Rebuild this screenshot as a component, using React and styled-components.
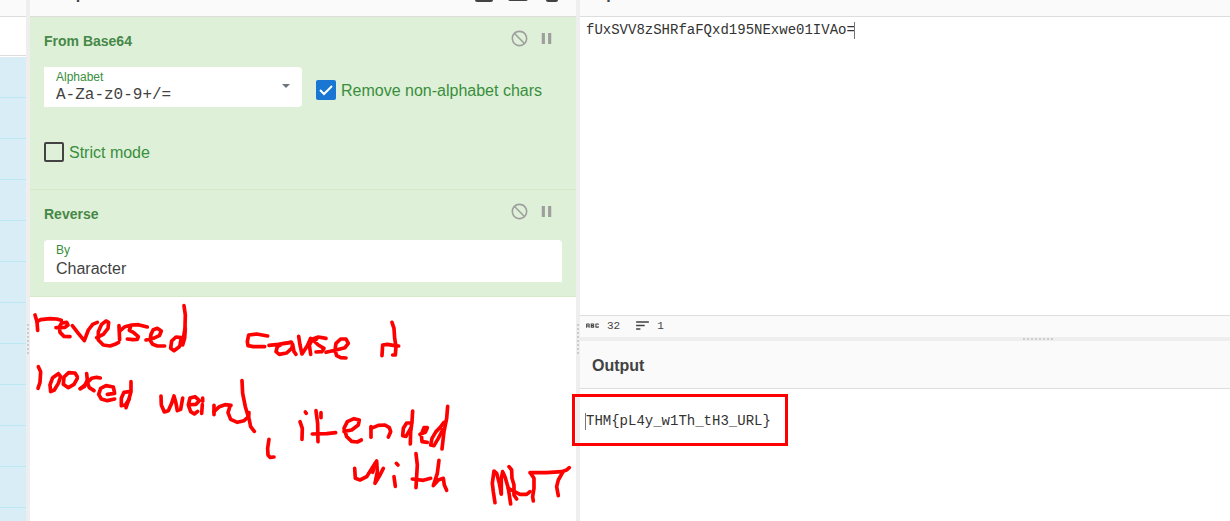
import React from "react";
import styled, { createGlobalStyle } from "styled-components";
import { MdNotInterested, MdPause, MdSave, MdFolder, MdDelete, MdAbc, MdSort } from "react-icons/md";

const GlobalStyle = createGlobalStyle`
  *, *::before, *::after { box-sizing: border-box; }
  body {
    margin: 0;
    background: #fff;
    color: #424242;
    font-family: "Liberation Sans", Arial, sans-serif;
    font-size: 16px;
  }
`;

const Workspace = styled.div`
  display: grid;
  grid-template-columns: 26px 4px 546fr 4px 650fr;
  height: 100vh;
  overflow: hidden;
`;

const Column = styled.section`
  display: flex;
  flex-direction: column;
  min-width: 0;
  min-height: 0;
  overflow: ${(p) => (p.$clip ? "hidden" : "visible")};
`;

const TitleBar = styled.header`
  flex: none;
  display: flex;
  align-items: flex-end;
  height: ${(p) => (p.$scrolled ? "17px" : "48px")};
  overflow: hidden;
  background: #fafafa;
  border-bottom: 1px solid #ddd;
`;

const TitleContent = styled.div`
  flex: 1;
  display: flex;
  align-items: center;
  justify-content: space-between;
  height: 48px;
  padding: 2px 12px 0;
`;

const Title = styled.h2`
  margin: 0;
  padding-top: 2px;
  font-size: 16px;
  line-height: 20px;
`;

const IconRow = styled.div`
  display: flex;
  gap: ${(p) => p.$gap}px;
`;

const IconButton = styled.button`
  display: flex;
  padding: 0;
  border: 0;
  background: none;
  color: ${(p) => (p.$muted ? "#9e9e9e" : "#424242")};
  cursor: pointer;
`;

const Gutter = styled.div`
  display: flex;
  flex-direction: ${(p) => (p.$horizontal ? "row" : "column")};
  align-items: center;
  gap: 2px;
  padding: ${(p) => (p.$horizontal ? "0 0 0 443px" : "324px 0 0")};
  background: #eee;
`;

const Dot = styled.i`
  width: 2px;
  height: 2px;
  background: #ccc;
`;

const Search = styled.input`
  flex: none;
  width: 100%;
  height: 39px;
  margin-bottom: 1px;
  border: 0;
  border-bottom: 1px solid #ddd;
  background: #fff;
`;

const OperationList = styled.ul`
  margin: 0;
  padding: 0;
  list-style: none;
`;

const OperationItem = styled.li`
  height: 41px;
  background: #d9edf7;
  border-bottom: 1px solid #bce8f1;
`;

const Operation = styled.article`
  flex: none;
  padding: 12px 14px ${(p) => p.$bottom}px;
  background: #dff0d8;
  border-bottom: 1px solid #d6e9c6;
`;

const OperationHead = styled.div`
  display: flex;
  align-items: flex-start;
  justify-content: space-between;
  height: 38px;
  padding-right: 6px;
`;

const OperationName = styled.h3`
  margin: 0;
  padding-top: 4px;
  color: #468847;
  font-size: 14px;
  line-height: 16px;
`;

const Arguments = styled.div`
  display: flex;
  flex-wrap: wrap;
  align-items: center;
  gap: 35px 14px;
`;

const Field = styled.label`
  display: flex;
  flex-direction: column;
  width: ${(p) => (p.$wide ? "100%" : "258px")};
  height: ${(p) => (p.$wide ? "42px" : "40px")};
  padding: 4px 12px 0;
  background: #fff;
  border-radius: ${(p) => (p.$wide ? "4px 4px 0 0" : "0 4px 4px 0")};
`;

const FieldName = styled.span`
  color: #388e3c;
  font-size: 12px;
  line-height: 12px;
`;

const FieldRow = styled.span`
  display: flex;
  align-items: center;
`;

const TextInput = styled.input`
  flex: 1;
  min-width: 0;
  height: 24px;
  padding: 0;
  border: 0;
  background: none;
  color: #424242;
  font: 16px "Liberation Mono", monospace;
`;

const MenuButton = styled.button`
  display: flex;
  align-items: flex-start;
  height: 22px;
  padding: 0;
  border: 0;
  background: none;
`;

const Select = styled.select`
  appearance: none;
  height: 24px;
  padding: 0;
  border: 0;
  background: none;
  color: #424242;
  font: 16px "Liberation Sans", Arial, sans-serif;
`;

const CheckLabel = styled.label`
  display: flex;
  align-items: flex-start;
  gap: 5px;
  margin-top: ${(p) => (p.$raised ? "8px" : "0")};
  color: #388e3c;
  line-height: 22px;
`;

const BoxStack = styled.span`
  display: grid;
  > * { grid-area: 1 / 1; }
  > svg { pointer-events: none; }
`;

const Checkbox = styled.input`
  appearance: none;
  width: 20px;
  height: 20px;
  margin: 0;
  border: 2px solid #424242;
  border-radius: 2px;
  &:checked {
    border-color: #1976d2;
    background: #1976d2;
  }
`;

const Ink = styled.svg`
  flex: none;
  display: block;
  width: 546px;
  height: 224px;
  fill: none;
  stroke: #f00;
  stroke-linecap: round;
  stroke-linejoin: round;
`;

const IoColumn = styled.section`
  display: grid;
  grid-template-rows: 337fr 4px 180fr;
  min-width: 0;
`;

const Editor = styled.div`
  position: relative;
  flex: 1;
  display: flex;
  min-height: 0;
`;

const TextArea = styled.textarea`
  flex: 1;
  min-width: 0;
  padding: ${(p) => p.$top}px 6px 0;
  border: 0;
  outline: 0;
  resize: none;
  background: none;
  color: #333;
  font: 14px/16px "Liberation Mono", monospace;
`;

const Caret = styled.span`
  position: absolute;
  top: ${(p) => p.$top}px;
  left: ${(p) => p.$left}px;
  width: 1px;
  height: 17px;
  background: #777;
`;

const Highlight = styled.div`
  position: absolute;
  top: 5px;
  left: -8px;
  width: 216px;
  height: 52px;
  border: 3px solid #f00;
  pointer-events: none;
`;

const StatusBar = styled.footer`
  flex: none;
  display: flex;
  align-items: center;
  gap: 14px;
  height: 22px;
  padding: 0 4px 2px;
  background: #fafafa;
  border-top: 1px solid #ddd;
  font: 11px "Liberation Mono", monospace;
`;

const Status = styled.span`
  display: flex;
  align-items: center;
  gap: 6px;
`;

// Freehand strokes, grouped by the origin of each part of the note.
const notes = [
  { x: 20, y: 295, strokes: [
    "45,60 51,80 53,106", "51,80 62,74 90,71 110,72 124,76",
    "108,98 135,97 144,90 140,82 125,84 118,96 120,112 132,124 150,125",
    "157,92 175,115 193,137 205,105 218,88 232,82",
    "230,128 250,118 264,100 266,82 258,78 245,88 235,110 235,135 250,150 270,153 285,148 296,142",
    "297,92 299,134", "299,108 315,95 335,90 355,89 370,93 382,96",
    "332,94 328,106 340,112 355,125 352,133 338,134 322,132",
    "378,135 400,130 418,122 424,108 412,100 400,104 393,118 390,135 398,148 412,153 434,153",
    "492,32 496,60 495,100 490,130 478,155 462,167 452,160 455,138 468,126 484,128 480,150", "496,100 494,130 488,150",
    "55,215 62,230 60,262 54,280",
    "115,236 98,248 90,270 92,290 103,285 115,265 122,245 115,236",
    "172,245 165,234 146,233 132,246 130,268 145,278 162,268 172,250",
    "200,236 202,255 193,275 180,281", "182,281 200,265 215,250 230,247 241,249", "202,262 208,278 222,287",
    "262,298 284,295 280,276 258,272 242,280 236,298 244,312 262,317 284,312",
    "333,260 333,290 326,315 318,338", "328,290 312,292 304,310 304,332 316,330 328,312",
  ] },
  { x: 220, y: 295, strokes: [
    "143,123 110,117 86,120 82,140 84,152 100,155 134,155",
    "147,151 175,148 215,142 190,145 172,155 168,170 178,178 200,174 215,160 218,148 222,170 228,178",
    "236,124 240,150 246,177 262,152 272,130",
    "272,178 268,150 278,132 295,126 318,130", "290,132 282,138 295,150 312,160 306,170 288,171",
    "318,172 345,166 375,158 385,145 378,132 362,132 348,145 345,165 350,182 362,188 378,189",
    "516,82 522,100 524,130 528,155 526,180 518,180", "486,182 488,150 502,148 525,152 536,153",
  ] },
  { x: 150, y: 370, strokes: [
    "33,78 34,105 43,126 55,122 65,100 72,78 78,100 82,122 92,118 98,84",
    "118,104 138,103 148,92 135,80 120,84 115,105 122,125 133,132 143,124",
    "157,104 155,130", "158,84 158,94",
    "192,106 192,134", "192,125 208,110 225,104 243,106",
    "240,108 234,128 242,148 262,157 282,152 296,140 297,128",
    "276,32 278,70 286,110 298,150 302,170 313,184",
    "357,208 353,235 354,255 360,262 372,261",
    "450,155 457,175 456,208", "466,126 469,130",
    "498,122 503,160 504,215", "487,192 530,191 557,188", "513,128 513,143",
    "582,184 605,180 625,165 628,150 612,146 592,155 582,175 590,200 605,214 622,216 634,210",
  ] },
  { x: 340, y: 395, strokes: [
    "93,127 93,95", "93,100 115,91 135,90 148,98 152,110 145,126",
    "218,48 216,80 212,110 211,147", "215,84 200,84 190,100 188,122 198,124 212,100",
    "240,118 256,112 262,98 252,98 244,118 246,140 262,142",
    "323,34 320,70 312,110 306,162", "312,82 300,98 288,110 276,130 272,150 282,152 295,130 308,105",
    "44,220 46,250 60,255 80,245 96,220 110,198 112,230 105,265 120,240 130,220", "106,205 98,232",
    "162,245 166,274", "169,205 174,210",
    "228,176 232,210 228,278", "217,252 250,256 272,250",
    "297,196 292,235 280,272 295,255 310,250 313,270 320,286",
    "465,323 460,290 457,265 462,228 470,235 478,265 484,297",
    "484,297 484,250 488,230 495,245 505,280 512,327",
    "507,215 515,225 516,250 522,270 522,300 530,312", "505,280 540,298 560,298 570,290",
    "570,233 620,233 665,230 680,225 688,218", "572,235 582,250 582,280 578,305 580,318",
    "668,232 655,255 650,275 655,302",
  ] },
];

function Dots() {
  return Array.from({ length: 8 }, (_, i) => <Dot key={i} />);
}

function OperationControls() {
  return (
    <IconRow $gap={8}>
      <IconButton type="button" $muted aria-label="Disable operation"><MdNotInterested size={19} /></IconButton>
      <IconButton type="button" $muted aria-label="Set breakpoint"><MdPause size={19} /></IconButton>
    </IconRow>
  );
}

function Check({ label, checked, raised }) {
  return (
    <CheckLabel $raised={raised}>
      <BoxStack>
        <Checkbox type="checkbox" defaultChecked={checked} />
        {checked && (
          <svg width="20" height="20" viewBox="0 0 20 20">
            <path d="M4 10l4 4 8-8" fill="none" stroke="#fff" strokeWidth="2" />
          </svg>
        )}
      </BoxStack>
      {label}
    </CheckLabel>
  );
}

export default function App() {
  return (
    <>
      <GlobalStyle />
      <Workspace>
        <Column $clip>
          <TitleBar $scrolled />
          <Search type="search" aria-label="Search operations" />
          <OperationList>
            {Array.from({ length: 12 }, (_, i) => <OperationItem key={i} />)}
          </OperationList>
        </Column>
        <Gutter><Dots /></Gutter>
        <Column $clip>
          <TitleBar $scrolled>
            <TitleContent>
              <Title>Recipe</Title>
              <IconRow $gap={10}>
                <IconButton type="button" aria-label="Save recipe"><MdSave size={24} /></IconButton>
                <IconButton type="button" aria-label="Load recipe"><MdFolder size={24} /></IconButton>
                <IconButton type="button" aria-label="Clear recipe"><MdDelete size={24} /></IconButton>
              </IconRow>
            </TitleContent>
          </TitleBar>
          <Operation $bottom={25}>
            <OperationHead>
              <OperationName>From Base64</OperationName>
              <OperationControls />
            </OperationHead>
            <Arguments>
              <Field>
                <FieldName>Alphabet</FieldName>
                <FieldRow>
                  <TextInput type="text" aria-label="Alphabet" defaultValue="A-Za-z0-9+/=" />
                  <MenuButton type="button" aria-label="Alphabet presets">
                    <svg width="8" height="4" viewBox="0 0 8 4"><path d="M0 0h8L4 4z" fill="#6c757d" /></svg>
                  </MenuButton>
                </FieldRow>
              </Field>
              <Check label="Remove non-alphabet chars" checked raised />
              <Check label="Strict mode" />
            </Arguments>
          </Operation>
          <Operation $bottom={14}>
            <OperationHead>
              <OperationName>Reverse</OperationName>
              <OperationControls />
            </OperationHead>
            <Field $wide>
              <FieldName>By</FieldName>
              <Select defaultValue="Character">
                <option>Byte</option>
                <option>Character</option>
                <option>Line</option>
              </Select>
            </Field>
          </Operation>
          <Ink viewBox="30 297 546 224" role="img" aria-label="Handwritten note">
            {notes.map((n) => (
              <g key={`${n.x}-${n.y}`} transform={`translate(${n.x} ${n.y}) scale(0.3333)`} strokeWidth="11">
                {n.strokes.map((s) => <polyline key={s} points={s} />)}
              </g>
            ))}
          </Ink>
        </Column>
        <Gutter><Dots /></Gutter>
        <IoColumn>
          <Column>
            <TitleBar $scrolled>
              <TitleContent><Title>Input</Title></TitleContent>
            </TitleBar>
            <Editor>
              <TextArea $top={5} aria-label="Input" spellCheck={false} defaultValue="fUxSVV8zSHRfaFQxd195NExwe01IVAo=" />
              <Caret $top={5} $left={274} />
            </Editor>
            <StatusBar>
              <Status><MdAbc size={17} />32</Status>
              <Status><MdSort size={17} />1</Status>
            </StatusBar>
          </Column>
          <Gutter $horizontal><Dots /></Gutter>
          <Column>
            <TitleBar>
              <TitleContent><Title>Output</Title></TitleContent>
            </TitleBar>
            <Editor>
              <TextArea $top={24} aria-label="Output" readOnly spellCheck={false} defaultValue="THM{pL4y_w1Th_tH3_URL}" />
              <Caret $top={24} $left={5} />
              <Highlight />
            </Editor>
          </Column>
        </IoColumn>
      </Workspace>
    </>
  );
}
